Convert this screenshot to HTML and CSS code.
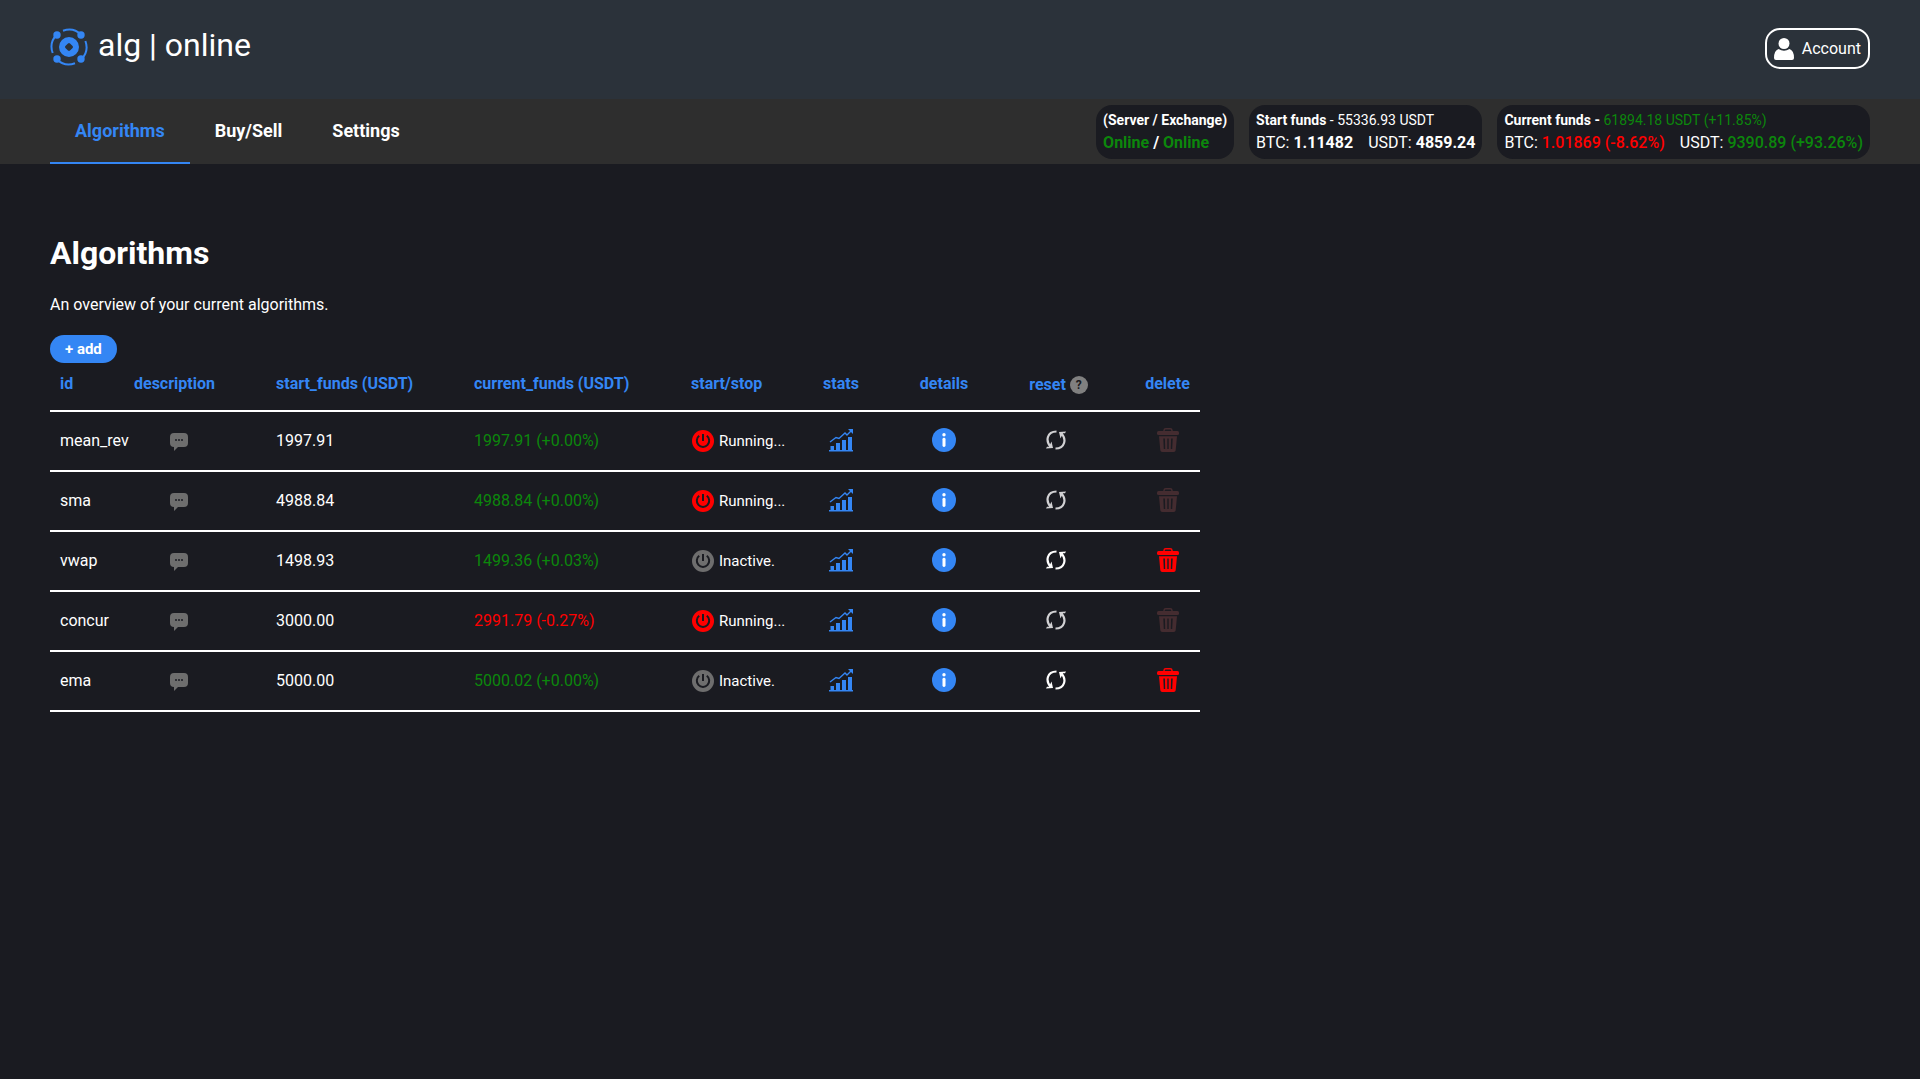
FILE: index.html
```html
<!DOCTYPE html>
<html lang="en">
<head>
<meta charset="utf-8">
<meta name="viewport" content="width=device-width, initial-scale=1">
<title>alg | online</title>
<link rel="stylesheet" href="styles.css">
</head>
<body>
<svg class="sprite" aria-hidden="true">
  <symbol id="i-comment" viewBox="0 0 18 18"><path d="M4 0h10a4 4 0 0 1 4 4v6a4 4 0 0 1-4 4H8l-4 4v-4a4 4 0 0 1-4-4V4a4 4 0 0 1 4-4z" fill="currentColor"/><path d="M5 6h2v2H5zM8 6h2v2H8zM11 6h2v2h-2z" fill="#303136"/></symbol>
  <symbol id="i-power" viewBox="0 0 22 22"><circle cx="11" cy="11" r="11" fill="currentColor"/><path d="M7.2 5.8a6.2 6.2 0 1 0 7.6 0M11 4v7" fill="none" stroke="#1a1b21" stroke-width="2"/></symbol>
  <symbol id="i-stats" viewBox="0 0 24 24"><path d="M0 22h24v1.500H0zM1.500 18H5v4H1.500zM7 15h4v7H7zM13 12h4v10h-4zM19 9h4v13h-4z" fill="currentColor"/><path d="M1 14l6-4.500 3 1L16 5l2 2 5-5" fill="none" stroke="currentColor" stroke-width="1.400"/><path d="M19 1h5v5z" fill="currentColor"/></symbol>
  <symbol id="i-info" viewBox="0 0 24 24"><circle cx="12" cy="12" r="12" fill="currentColor"/><circle cx="12" cy="6.800" r="1.700" fill="#fff"/><rect x="10.500" y="9.800" width="3" height="9.200" rx="1.400" fill="#fff"/></symbol>
  <symbol id="i-reset" viewBox="0 0 20 20"><path d="M10.500 1.500C1 1.500-1 11 5 17M9.500 18.500C19 18.500 21 9 15 3" fill="none" stroke="currentColor" stroke-width="2.200"/><path d="M13 2l7-.5-1 1.700h-2L14.500 8.500zM7 18l-7 .5 1-1.700h2L5.500 11.500z" fill="currentColor"/></symbol>
  <symbol id="i-trash" viewBox="0 0 22 24"><path d="M7 4V2.500A1.800 1.800 0 0 1 8.800.8h4.400A1.800 1.800 0 0 1 15 2.500V4" fill="none" stroke="currentColor" stroke-width="1.500"/><rect y="3" width="22" height="4" rx="1.500" fill="currentColor"/><path fill-rule="evenodd" d="M2 8.300h18l-1.300 14a2 2 0 0 1-2 1.700H5.300a2 2 0 0 1-2-1.700zM6.300 10.500l.5 10.500h1.400L7.900 10.500zM10.300 10.500V21h1.400V10.500zM14.100 10.500L13.800 21h1.400l.5-10.500z" fill="currentColor"/></symbol>
</svg>

<header class="masthead">
  <a class="brand" href="#">
    <svg class="brand-mark" viewBox="0 0 38 38" aria-hidden="true">
      <path fill-rule="evenodd" d="M19 9a10 10 0 1 0 0 20 10 10 0 0 0 0-20zM18 15.400Q19 14.600 20 15.400L22.600 18Q23.400 19 22.600 20L20 22.600Q19 23.400 18 22.600L15.400 20Q14.600 19 15.400 18z" fill="currentColor"/>
      <g fill="currentColor"><circle cx="7" cy="7" r="3.700"/><circle cx="31" cy="7" r="3.700"/><circle cx="7" cy="31" r="3.700"/><circle cx="31" cy="31" r="3.700"/></g>
      <path d="M13 2.700A17.400 17.400 0 0 1 31 6.400M35.400 13A17.400 17.400 0 0 1 31.600 31M25 35.300A17.400 17.400 0 0 1 7 31.600M2.700 25A17.400 17.400 0 0 1 6.400 7" fill="none" stroke="currentColor" stroke-width="2"/>
    </svg>
    <span class="brand-name">alg | online</span>
  </a>
  <button class="account" type="button">
    <svg class="account-icon" viewBox="0 0 20 22" aria-hidden="true"><circle cx="10" cy="5.500" r="5.500" fill="currentColor"/><path d="M4.500 11q5.500 3.500 11 0 4.500 1.500 4.500 9 0 2-2 2H2q-2 0-2-2 0-7.500 4.500-9z" fill="currentColor"/></svg>
    Account
  </button>
</header>

<div class="navbar">
  <nav class="tabs">
    <a class="tab active" href="#">Algorithms</a>
    <a class="tab" href="#">Buy/Sell</a>
    <a class="tab" href="#">Settings</a>
  </nav>
  <div class="status">
    <div class="card">
      <div class="card-top"><b>(Server / Exchange)</b></div>
      <div class="card-main"><span><b class="up">Online</b> <b>/</b> <b class="up">Online</b></span></div>
    </div>
    <div class="card">
      <div class="card-top"><b>Start funds</b> - 55336.93 USDT</div>
      <div class="card-main"><span>BTC: <b>1.11482</b></span><span>USDT: <b>4859.24</b></span></div>
    </div>
    <div class="card">
      <div class="card-top"><b>Current funds -</b> <span class="up">61894.18 USDT (+11.85%)</span></div>
      <div class="card-main"><span>BTC: <span class="down change">1.01869 (-8.62%)</span></span><span>USDT: <span class="up change">9390.89 (+93.26%)</span></span></div>
    </div>
  </div>
</div>

<main class="content">
  <h1>Algorithms</h1>
  <p class="lead">An overview of your current algorithms.</p>
  <button class="add" type="button">+ add</button>
  <table class="algos">
    <colgroup><col class="c-id"><col class="c-desc"><col class="c-start"><col class="c-current"><col class="c-run"><col class="c-stats"><col class="c-details"><col class="c-reset"><col class="c-delete"></colgroup>
    <thead>
      <tr><th>id</th><th>description</th><th>start_funds (USDT)</th><th>current_funds (USDT)</th><th>start/stop</th><th class="mid">stats</th><th class="mid">details</th><th class="mid"><span class="with-help">reset <span class="help">?</span></span></th><th class="mid">delete</th></tr>
    </thead>
    <tbody>
      <tr>
        <td>mean_rev</td>
        <td class="desc"><button class="icon note" type="button" aria-label="Description"><svg><use href="#i-comment"/></svg></button></td>
        <td>1997.91</td><td class="up">1997.91 (+0.00%)</td>
        <td><button class="run on" type="button"><svg><use href="#i-power"/></svg>Running...</button></td>
        <td class="mid"><button class="icon" type="button" aria-label="Stats"><svg><use href="#i-stats"/></svg></button></td>
        <td class="mid"><button class="icon" type="button" aria-label="Details"><svg><use href="#i-info"/></svg></button></td>
        <td class="mid reset"><button class="icon cycle" type="button" aria-label="Reset" disabled><svg><use href="#i-reset"/></svg></button></td>
        <td class="mid"><button class="icon bin" type="button" aria-label="Delete" disabled><svg><use href="#i-trash"/></svg></button></td>
      </tr>
      <tr>
        <td>sma</td>
        <td class="desc"><button class="icon note" type="button" aria-label="Description"><svg><use href="#i-comment"/></svg></button></td>
        <td>4988.84</td><td class="up">4988.84 (+0.00%)</td>
        <td><button class="run on" type="button"><svg><use href="#i-power"/></svg>Running...</button></td>
        <td class="mid"><button class="icon" type="button" aria-label="Stats"><svg><use href="#i-stats"/></svg></button></td>
        <td class="mid"><button class="icon" type="button" aria-label="Details"><svg><use href="#i-info"/></svg></button></td>
        <td class="mid reset"><button class="icon cycle" type="button" aria-label="Reset" disabled><svg><use href="#i-reset"/></svg></button></td>
        <td class="mid"><button class="icon bin" type="button" aria-label="Delete" disabled><svg><use href="#i-trash"/></svg></button></td>
      </tr>
      <tr>
        <td>vwap</td>
        <td class="desc"><button class="icon note" type="button" aria-label="Description"><svg><use href="#i-comment"/></svg></button></td>
        <td>1498.93</td><td class="up">1499.36 (+0.03%)</td>
        <td><button class="run" type="button"><svg><use href="#i-power"/></svg>Inactive.</button></td>
        <td class="mid"><button class="icon" type="button" aria-label="Stats"><svg><use href="#i-stats"/></svg></button></td>
        <td class="mid"><button class="icon" type="button" aria-label="Details"><svg><use href="#i-info"/></svg></button></td>
        <td class="mid reset"><button class="icon cycle" type="button" aria-label="Reset"><svg><use href="#i-reset"/></svg></button></td>
        <td class="mid"><button class="icon bin" type="button" aria-label="Delete"><svg><use href="#i-trash"/></svg></button></td>
      </tr>
      <tr>
        <td>concur</td>
        <td class="desc"><button class="icon note" type="button" aria-label="Description"><svg><use href="#i-comment"/></svg></button></td>
        <td>3000.00</td><td class="down">2991.79 (-0.27%)</td>
        <td><button class="run on" type="button"><svg><use href="#i-power"/></svg>Running...</button></td>
        <td class="mid"><button class="icon" type="button" aria-label="Stats"><svg><use href="#i-stats"/></svg></button></td>
        <td class="mid"><button class="icon" type="button" aria-label="Details"><svg><use href="#i-info"/></svg></button></td>
        <td class="mid reset"><button class="icon cycle" type="button" aria-label="Reset" disabled><svg><use href="#i-reset"/></svg></button></td>
        <td class="mid"><button class="icon bin" type="button" aria-label="Delete" disabled><svg><use href="#i-trash"/></svg></button></td>
      </tr>
      <tr>
        <td>ema</td>
        <td class="desc"><button class="icon note" type="button" aria-label="Description"><svg><use href="#i-comment"/></svg></button></td>
        <td>5000.00</td><td class="up">5000.02 (+0.00%)</td>
        <td><button class="run" type="button"><svg><use href="#i-power"/></svg>Inactive.</button></td>
        <td class="mid"><button class="icon" type="button" aria-label="Stats"><svg><use href="#i-stats"/></svg></button></td>
        <td class="mid"><button class="icon" type="button" aria-label="Details"><svg><use href="#i-info"/></svg></button></td>
        <td class="mid reset"><button class="icon cycle" type="button" aria-label="Reset"><svg><use href="#i-reset"/></svg></button></td>
        <td class="mid"><button class="icon bin" type="button" aria-label="Delete"><svg><use href="#i-trash"/></svg></button></td>
      </tr>
    </tbody>
  </table>
</main>
</body>
</html>
```
FILE: styles.css
```css
:root {
  --bg: #1a1b21;
  --blue: #3486f4;
  --green: #0c870c;
  --red: #ff0000;
  --grey: #6e6e6e;
}

* { box-sizing: border-box; }

body {
  margin: 0;
  background: var(--bg);
  color: #fff;
  font: 400 16px/20px Roboto, sans-serif;
}

button {
  margin: 0;
  padding: 0;
  border: 0;
  background: none;
  color: inherit;
  font: inherit;
  cursor: pointer;
}

a { color: inherit; text-decoration: none; }
b { font-weight: 700; }

.sprite { display: none; }
.up { color: var(--green); }
.down { color: var(--red); }
.change { font-weight: 500; }

.masthead {
  display: flex;
  align-items: flex-start;
  justify-content: space-between;
  padding: 28px 50px 30px;
  background: #2b323a;
}

.brand {
  display: flex;
  align-items: flex-start;
  gap: 10px;
  font-size: 32px;
  line-height: 34px;
}

.brand-mark {
  width: 38px;
  height: 38px;
  color: var(--blue);
}

.account {
  display: flex;
  align-items: center;
  gap: 8px;
  height: 41px;
  padding: 0 7px;
  border: 2px solid #fff;
  border-radius: 15px;
}

.account-icon { width: 20px; height: 22px; }

.navbar {
  display: flex;
  align-items: center;
  justify-content: space-between;
  padding: 0 50px;
  background: #2e2e2e;
}

.tabs { display: flex; }

.tab {
  padding: 21px 25px 20px;
  border-bottom: 2px solid transparent;
  font-size: 18px;
  font-weight: 700;
  line-height: 22px;
}

.tab.active { border-color: var(--blue); color: var(--blue); }

.status { display: flex; gap: 15px; }

.card {
  padding: 5px 7px 4px;
  border-radius: 16px;
  background: var(--bg);
  white-space: nowrap;
}

.card-top { font-size: 14px; line-height: 21px; }
.card-main { display: flex; gap: 15px; line-height: 24px; }

.content { padding: 70px 50px; }

h1 {
  margin: 0;
  font-size: 32px;
  font-weight: 700;
  line-height: 38px;
}

.lead { margin: 23px 0 20px; }

.add {
  display: block;
  height: 28px;
  padding: 0 15px;
  border-radius: 14px;
  background: var(--blue);
  font-weight: 700;
  font-size: 15px;
}

.algos {
  width: 1150px;
  max-width: 100%;
  border-collapse: separate;
  border-spacing: 0;
  table-layout: fixed;
}

.c-id { width: 74px; }
.c-desc { width: 142px; }
.c-start { width: 198px; }
.c-current { width: 217px; }
.c-run { width: 108px; }
.c-stats { width: 104px; }
.c-details { width: 102px; }
.c-reset { width: 127px; }
.c-delete { width: 78px; }

.algos th,
.algos td {
  padding: 0 0 0 10px;
  border-bottom: 2px solid #fff;
  text-align: left;
  white-space: nowrap;
}

.algos th {
  height: 49px;
  padding-bottom: 6px;
  color: var(--blue);
  font-weight: 700;
}

.algos td { height: 60px; }
.algos .mid { padding-left: 0; text-align: center; }
.algos td.mid { padding-bottom: 3px; }
.algos .reset { padding-right: 6px; }
.algos th:last-child,
.algos td:last-child { padding-left: 13px; }
.algos .desc { padding-left: 46px; }

.with-help {
  display: inline-flex;
  align-items: center;
  gap: 4px;
  padding-top: 3px;
  vertical-align: middle;
}

.help {
  width: 18px;
  height: 18px;
  border-radius: 50%;
  background: #808080;
  color: var(--bg);
  font-size: 12px;
  line-height: 18px;
}

.icon { display: inline-block; color: var(--blue); vertical-align: middle; }
.icon svg { display: block; width: 24px; height: 24px; }
.note { color: var(--grey); }
.note svg { width: 18px; height: 18px; }
.cycle { color: #fff; }
.cycle svg { width: 20px; height: 20px; }
.cycle:disabled { color: #d1d1d3; }
.bin { color: var(--red); }
.bin svg { width: 22px; }
.bin:disabled { color: #442c30; }

.run {
  display: flex;
  align-items: center;
  gap: 5px;
  padding-left: 1px;
  font-size: 15px;
}

.run svg { width: 22px; height: 22px; color: var(--grey); }
.run.on svg { color: var(--red); }
```
